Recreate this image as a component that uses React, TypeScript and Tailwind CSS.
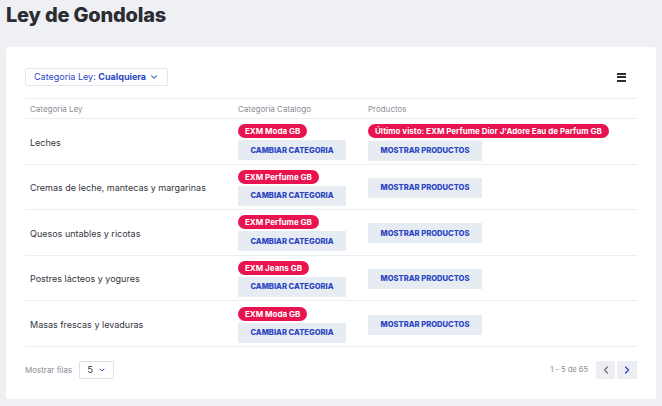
import { ChevronDown, ChevronLeft, ChevronRight } from "lucide-react";

const rows = [
	{ ley: "Leches", cat: "EXM Moda GB", visto: "Último visto: EXM Perfume Dior J'Adore Eau de Parfum GB" },
	{ ley: "Cremas de leche, mantecas y margarinas", cat: "EXM Perfume GB" },
	{ ley: "Quesos untables y ricotas", cat: "EXM Perfume GB" },
	{ ley: "Postres lácteos y yogures", cat: "EXM Jeans GB" },
	{ ley: "Masas frescas y levaduras", cat: "EXM Moda GB" },
];

function Badge({ text }: { text: string }) {
	return (
		<span className="inline-flex h-[14px] w-fit items-center rounded-full bg-[#e8134f] px-[7px] text-[8px] font-bold leading-none text-white">
			{text}
		</span>
	);
}

function ActionButton({ text, width }: { text: string; width: string }) {
	return (
		<button
			className={`flex h-[20px] items-center justify-center bg-[#e7ebf2] text-[7.6px] font-extrabold text-[#2a45c4] ${width}`}
		>
			{text}
		</button>
	);
}

export default function App() {
	return (
		<div
			className="min-h-screen bg-[#eef0f4] px-[6px] pt-[2px] pb-[8px] text-[#2b2e35]"
			style={{ fontFamily: "Inter, 'Noto Sans', sans-serif" }}
		>
			<h1 className="text-[20px] font-extrabold leading-[26px] tracking-[-0.01em] text-[#2a2c31]">
				Ley de Gondolas
			</h1>

			<div className="mt-[19px] rounded-[3px] bg-white px-[19px] pt-[21px] pb-[20px]">
				{/* toolbar */}
				<div className="flex items-center justify-between">
					<button className="flex h-[18px] items-center gap-[3px] rounded-[2px] border border-[#e3e6ec] px-[8px] text-[9px] text-[#2a45c4]">
						<span>
							Categoria Ley: <span className="font-bold">Cualquiera</span>
						</span>
						<ChevronDown size={10} strokeWidth={2.5} />
					</button>
					<button className="mr-[11px] flex flex-col gap-[1.5px]">
						<span className="h-[2px] w-[9px] bg-[#2b2e35]" />
						<span className="h-[2px] w-[9px] bg-[#2b2e35]" />
						<span className="h-[2px] w-[9px] bg-[#2b2e35]" />
					</button>
				</div>

				{/* table */}
				<div className="mt-[12px]">
					<div className="grid h-[21px] grid-cols-[208px_130px_1fr] items-center border-y border-[#eceef2] text-[8px] text-[#8a8d94]">
						<div className="pl-[5px]">Categoria Ley</div>
						<div className="pl-[5px]">Categoria Catalogo</div>
						<div className="pl-[5px]">Productos</div>
					</div>
					{rows.map((r) => (
						<div
							key={r.ley}
							className="grid h-[45.6px] grid-cols-[208px_130px_1fr] items-center border-b border-[#eceef2]"
						>
							<div className="pl-[5px] pt-[2px] text-[9px] text-[#33363d]">{r.ley}</div>
							<div className="flex flex-col gap-[2px] pl-[5px] pt-[2px]">
								<Badge text={r.cat} />
								<ActionButton text="CAMBIAR CATEGORIA" width="w-[108px]" />
							</div>
							<div className="flex flex-col gap-[3px] pl-[5px] pt-[2px]">
								{r.visto && <Badge text={r.visto} />}
								<ActionButton text="MOSTRAR PRODUCTOS" width="w-[114px]" />
							</div>
						</div>
					))}
				</div>

				{/* footer */}
				<div className="mt-[14px] flex items-center justify-between">
					<div className="flex items-center gap-[7px] text-[8px] text-[#8a8d94]">
						<span>Mostrar filas</span>
						<button className="flex h-[18px] w-[35px] items-center justify-center gap-[5px] rounded-[2px] border border-[#dfe2e8] text-[9.5px] text-[#33363d]">
							5
							<ChevronDown size={8} strokeWidth={2.5} className="text-[#2a45c4]" />
						</button>
					</div>
					<div className="flex items-center text-[7.5px] text-[#8a8d94]">
						<span className="mr-[8px]">1 - 5 de 65</span>
						<button className="flex h-[18px] w-[19px] items-center justify-center bg-[#eceef3] text-[#6e7178]">
							<ChevronLeft size={12} strokeWidth={2.5} />
						</button>
						<button className="ml-[2px] flex h-[18px] w-[20px] items-center justify-center bg-[#eceef3] text-[#2a45c4]">
							<ChevronRight size={12} strokeWidth={2.5} />
						</button>
					</div>
				</div>
			</div>
		</div>
	);
}
